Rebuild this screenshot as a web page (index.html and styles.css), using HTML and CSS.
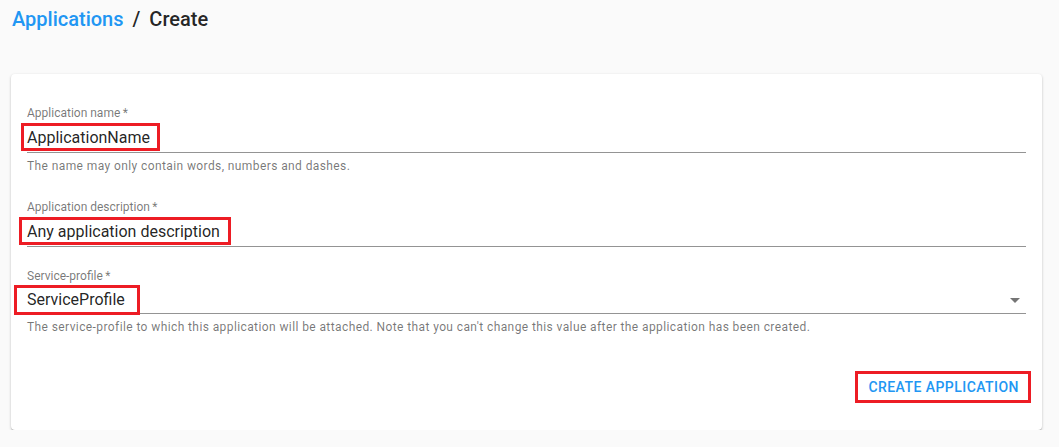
FILE: index.html
```html
<!DOCTYPE html>
<html>
<head>
<meta charset="utf-8">
<link rel="stylesheet" href="styles.css">
</head>
<body>
<div class="page">
  <div class="crumbs"><span class="crumb-link">Applications</span><span class="sep">/</span><span class="crumb-cur">Create</span></div>
  <div class="card">
    <div class="field">
      <div class="label">Application name&thinsp;*</div>
      <div class="input"><span class="value mark m1">ApplicationName</span></div>
      <div class="helper">The name may only contain words, numbers and dashes.</div>
    </div>
    <div class="field">
      <div class="label">Application description&thinsp;*</div>
      <div class="input"><span class="value mark m2">Any application description</span></div>
    </div>
    <div class="field">
      <div class="label">Service-profile&thinsp;*</div>
      <div class="input select"><span class="value mark m3">ServiceProfile</span>
        <svg class="arrow" width="24" height="24" viewBox="0 0 24 24"><path d="M7 10l5 5 5-5z" fill="rgba(0,0,0,0.54)"/></svg>
      </div>
      <div class="helper">The service-profile to which this application will be attached. Note that you can't change this value after the application has been created.</div>
    </div>
    <div class="actions">
      <button class="btn mark m4">CREATE APPLICATION</button>
    </div>
  </div>
</div>
</body>
</html>
```
FILE: styles.css
```css
html, body { margin: 0; padding: 0; background: #fafafa; }
body { font-family: Roboto, "Liberation Sans", Arial, sans-serif; color: rgba(0,0,0,0.87); }
.page { padding: 5px 17px 0 11px; }
.crumbs { font-size: 20px; font-weight: 500; line-height: 28px; height: 28px; padding-left: 1px; }
.crumb-link { color: #2196f3; }
.sep { margin: 0 9px 0 9px; color: rgba(0,0,0,0.87); }
.crumb-cur { color: rgba(0,0,0,0.87); }
.card { margin-top: 41px; background: #fff; border-radius: 4px; box-shadow: 0 1px 3px rgba(0,0,0,0.2), 0 1px 1px rgba(0,0,0,0.14), 0 2px 1px -1px rgba(0,0,0,0.12); padding: 32px 16px 35px 16px; display: flex; flex-direction: column; gap: 22px; }
.field:nth-child(2) { margin-top: -1px; }
.label { font-size: 12px; line-height: 14px; color: rgba(0,0,0,0.54); height: 14px; }
.input { margin-top: 2px; border-bottom: 1px solid rgba(0,0,0,0.42); height: 31px; box-sizing: border-box; display: flex; align-items: center; font-size: 16px; position: relative; }
.select { justify-content: space-between; height: 29px; }
.arrow { margin-right: -1px; margin-top: 1px; }
.value { position: relative; line-height: 19px; }
.helper { font-size: 12px; line-height: 14px; letter-spacing: 0.4px; color: rgba(0,0,0,0.54); margin-top: 6px; margin-bottom: 6px; }
.mark::before { content: ""; position: absolute; border: 3px solid #ed1c24; pointer-events: none; }
.m1::before { left: -6px; right: -10px; top: -5px; bottom: -4px; }
.m2::before { left: -8px; right: -11px; top: -5px; bottom: -4px; }
.m3::before { left: -13px; right: -15px; top: -5px; bottom: -6px; }
.actions { display: flex; justify-content: flex-end; margin-top: 17px; }
.btn { position: relative; font-family: inherit; font-size: 14px; font-weight: 500; letter-spacing: 0.45px; color: #2196f3; background: none; border: none; padding: 0; margin-right: 7px; line-height: 16px; }
.m4::before { left: -13px; right: -12px; top: -8px; bottom: -8px; }
```
